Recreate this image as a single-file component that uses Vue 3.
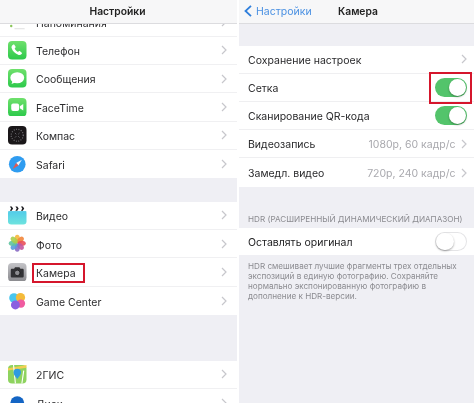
<script setup>
const listA = [
  { name: 'Напоминания', icon: 'rem' },
  { name: 'Телефон', icon: 'phone' },
  { name: 'Сообщения', icon: 'msg' },
  { name: 'FaceTime', icon: 'ft' },
  { name: 'Компас', icon: 'compass' },
  { name: 'Safari', icon: 'safari' },
]
const listB = [
  { name: 'Видео', icon: 'video' },
  { name: 'Фото', icon: 'photo' },
  { name: 'Камера', icon: 'camera', mark: true },
  { name: 'Game Center', icon: 'gc' },
]
const listC = [
  { name: '2ГИС', icon: 'gis' },
  { name: 'Диск', icon: 'disk' },
]
const groups = [
  { items: listA, cls: 'g-a' },
  { items: listB, cls: 'g-b' },
  { items: listC, cls: 'g-c' },
]
const petals = ['#f6b73c', '#f2863b', '#e9505a', '#c4579f', '#8a6cc4', '#5a9bdc', '#5fc3a0', '#a6ce4e']
</script>

<template>
  <div class="screen">
    <section class="panel left">
      <header class="nav nav-l"><span class="nav-title">Настройки</span></header>
      <div class="viewport">
        <div class="scroll">
          <div v-for="g in groups" :key="g.cls" class="group" :class="g.cls">
            <div v-for="it in g.items" :key="it.name" class="row">
              <span class="icon">
                <svg viewBox="0 0 20 20" width="18.500" height="18.500">
                  <defs>
                    <linearGradient id="grn" x1="0" y1="0" x2="0" y2="1">
                      <stop offset="0" stop-color="#6fe06c" />
                      <stop offset="1" stop-color="#2cc94b" />
                    </linearGradient>
                    <linearGradient id="teal" x1="0" y1="0" x2="0" y2="1">
                      <stop offset="0" stop-color="#4fc9ea" />
                      <stop offset="1" stop-color="#6ee3de" />
                    </linearGradient>
                    <linearGradient id="gry" x1="0" y1="0" x2="0" y2="1">
                      <stop offset="0" stop-color="#c4c4c8" />
                      <stop offset="1" stop-color="#8a8a8e" />
                    </linearGradient>
                  </defs>
                  <template v-if="it.icon === 'rem'">
                    <rect width="20" height="20" rx="4" fill="#fff" />
                    <circle cx="3.500" cy="14" r="1.300" fill="#8ac65a" />
                    <path d="M7 6h11M7 17h11" stroke="#ddd" />
                  </template>
                  <template v-else-if="it.icon === 'phone'">
                    <rect width="20" height="20" rx="4.400" fill="url(#grn)" />
                    <path d="M5.200 4.200c.6-.6 1.400-.5 1.800.1l1.100 1.700c.3.5.2 1-.2 1.400l-.7.7c.6 1.500 2 3 3.600 3.800l.8-.7c.4-.4 1-.4 1.400-.1l1.600 1.200c.6.4.6 1.200.1 1.700-1 1.100-2.300 1.400-3.700.9-3.500-1.200-6.100-4-7.100-7.200-.4-1.300.1-2.500 1.100-3.500z" fill="#fff" />
                  </template>
                  <template v-else-if="it.icon === 'msg'">
                    <rect width="20" height="20" rx="4.400" fill="url(#grn)" />
                    <ellipse cx="10" cy="9.500" rx="7.500" ry="6" fill="#fff" />
                    <path d="M5 13l-1.200 3.200 4-1.600z" fill="#fff" />
                  </template>
                  <template v-else-if="it.icon === 'ft'">
                    <rect width="20" height="20" rx="4.400" fill="url(#grn)" />
                    <rect x="3.500" y="6" width="8.500" height="8" rx="2" fill="#fff" />
                    <path d="M12.800 9l3.700-2.600v7.200l-3.700-2.600z" fill="#fff" />
                  </template>
                  <template v-else-if="it.icon === 'compass'">
                    <rect width="20" height="20" rx="4.400" fill="#1a1719" />
                    <circle cx="10" cy="10" r="6.500" fill="none" stroke="#77767a" stroke-width="1.300" stroke-dasharray="1 1.600" />
                    <path d="M7.500 7.500l1.500 1.500M12.500 12.500l-1.500-1.500M12.500 7.500l-1.500 1.500M7.500 12.500l1.500-1.500" stroke="#66656a" />
                  </template>
                  <template v-else-if="it.icon === 'safari'">
                    <circle cx="10" cy="10" r="9" fill="#2f9cf0" />
                    <path d="M15 5L11.300 11.300 8.700 8.700z" fill="#f2f4f7" />
                    <path d="M5 15L8.700 8.700 11.300 11.300z" fill="#e8584e" />
                  </template>
                  <template v-else-if="it.icon === 'video'">
                    <rect y="4" width="20" height="16" rx="3.500" fill="url(#teal)" />
                    <rect width="20" height="5.500" fill="#fff" />
                    <path d="M2 .5h2l1.500 2.200L4 5H2l1.500-2.300zM8 .5h2l1.500 2.200L10 5H8l1.500-2.300zM14 .5h2l1.500 2.200L16 5h-2l1.500-2.300z" fill="#1b1b1f" />
                  </template>
                  <template v-else-if="it.icon === 'photo'">
                    <g v-for="(c, i) in petals" :key="c" :transform="`rotate(${i * 45} 10 10)`">
                      <ellipse cx="10" cy="5.200" rx="2.800" ry="4.400" :fill="c" opacity=".9" />
                    </g>
                  </template>
                  <template v-else-if="it.icon === 'camera'">
                    <rect width="20" height="20" rx="4.400" fill="url(#gry)" />
                    <path d="M3 7.500c0-.8.600-1.400 1.400-1.400h2.200l1-1.600h4.800l1 1.600h2.200c.8 0 1.400.6 1.400 1.400v6.800c0 .8-.6 1.400-1.400 1.400H4.400c-.8 0-1.400-.6-1.400-1.400z" fill="#323235" />
                    <circle cx="10" cy="10.700" r="3" fill="#8d8d91" stroke="#1e1e20" />
                  </template>
                  <template v-else-if="it.icon === 'gc'">
                    <circle cx="6.500" cy="6.500" r="5.200" fill="#49c6ee" />
                    <circle cx="13.500" cy="6" r="5" fill="#f4bb3a" />
                    <circle cx="14" cy="12.500" r="4.500" fill="#f05ba0" />
                    <circle cx="8" cy="14" r="4.800" fill="#8a5fe0" />
                  </template>
                  <template v-else-if="it.icon === 'gis'">
                    <rect width="20" height="20" rx="4.400" fill="#8ed35f" />
                    <path d="M0 3.500L20 0v3L0 6z" fill="#f0cf52" />
                    <path d="M6 0l2 20M15 20l2-14" stroke="#fff" stroke-width="1.200" />
                    <path d="M10 15c-2.500-3-4-4.800-4-7a4 4 0 0 1 8 0c0 2.200-1.500 4-4 7z" fill="#2e9be0" />
                  </template>
                  <template v-else>
                    <rect width="20" height="20" rx="4.400" fill="#fff" />
                    <circle cx="10" cy="10" r="7.500" fill="#1465c4" />
                  </template>
                </svg>
              </span>
              <span class="label" :class="{ marked: it.mark }">{{ it.name }}</span>
              <svg class="chev" viewBox="0 0 6 10" width="6" height="10"><path d="M1 1l4 4-4 4" /></svg>
            </div>
          </div>
        </div>
      </div>
    </section>

    <section class="panel right">
      <header class="nav nav-r">
        <span class="back">
          <svg viewBox="0 0 8 12" width="8" height="12"><path d="M7 .8L1.500 6 7 11.200" /></svg>
          Настройки
        </span>
        <span class="nav-title centered">Камера</span>
      </header>
      <div class="settings">
        <div class="row-r">
          <span class="txt">Сохранение настроек</span>
          <svg class="chev" viewBox="0 0 6 10" width="6" height="10"><path d="M1 1l4 4-4 4" /></svg>
        </div>
        <div class="row-r">
          <span class="txt">Сетка</span>
          <span class="toggle-mark"><span class="toggle on"></span></span>
        </div>
        <div class="row-r">
          <span class="txt">Сканирование QR-кода</span>
          <span class="toggle on"></span>
        </div>
        <div class="row-r">
          <span class="txt">Видеозапись</span>
          <span class="val">1080р, 60 кадр/с</span>
          <svg class="chev" viewBox="0 0 6 10" width="6" height="10"><path d="M1 1l4 4-4 4" /></svg>
        </div>
        <div class="row-r">
          <span class="txt">Замедл. видео</span>
          <span class="val">720р, 240 кадр/с</span>
          <svg class="chev" viewBox="0 0 6 10" width="6" height="10"><path d="M1 1l4 4-4 4" /></svg>
        </div>
      </div>
      <h3 class="caption">HDR (РАСШИРЕННЫЙ ДИНАМИЧЕСКИЙ ДИАПАЗОН)</h3>
      <div class="settings single">
        <div class="row-r tall">
          <span class="txt">Оставлять оригинал</span>
          <span class="toggle"></span>
        </div>
      </div>
      <p class="note">HDR смешивает лучшие фрагменты трех отдельных экспозиций в единую фотографию. Сохраняйте нормально экспонированную фотографию в дополнение к HDR-версии.</p>
    </section>
  </div>
</template>

<style>
html, body { margin: 0; background: #fff; }
</style>

<style scoped>
.screen {
  width: 474px;
  height: 403px;
  display: flex;
  gap: 2px;
  overflow: hidden;
  background: #fff;
  font-family: Inter, "Liberation Sans", sans-serif;
  color: #2a2a2c;
  filter: blur(0.55px);
}
.panel { display: flex; flex-direction: column; background: #efeff4; height: 403px; }
.left { width: 237px; }
.right { width: 235px; }
.nav {
  height: 23.500px;
  flex: none;
  box-sizing: border-box;
  display: flex;
  align-items: center;
  justify-content: center;
  background: #f7f7f8;
  border-bottom: 1px solid #dcdcdf;
}
.nav-l { padding-right: 2px; }
.nav-title { font-size: 10.300px; font-weight: 600; color: #222; }
.nav-r { justify-content: flex-start; }
.centered { margin-left: 23px; }
.back {
  display: flex;
  align-items: center;
  gap: 4px;
  margin-left: 5px;
  width: 71px;
  font-size: 10.500px;
  color: #4a90e2;
  white-space: nowrap;
}
.back svg { fill: none; stroke: #2f7fdc; stroke-width: 1.800; flex: none; }
.viewport { flex: 1; overflow: hidden; }
.scroll { margin-top: -15.130px; }
.group { background: #fff; }
.g-b { margin-top: 23.400px; }
.g-c { margin-top: 45.700px; }
.row {
  height: 28.330px;
  box-sizing: border-box;
  display: flex;
  align-items: center;
  padding: 0 10px 0 8px;
  border-bottom: 1px solid #f0f0f2;
}
.group .row:last-child { border-bottom: none; }
.icon { width: 18.500px; height: 18.500px; flex: none; display: block; }
.icon svg { display: block; }
.label {
  margin-left: 9.500px;
  font-size: 10.500px;
  flex: 1;
  color: #2c2c2e;
  position: relative;
  top: 1.300px;
}
.marked::before {
  content: "";
  position: absolute;
  left: -4px;
  top: -3.800px;
  width: 53px;
  height: 20px;
  border: 2px solid #d5162c;
  box-sizing: border-box;
}
.chev { flex: none; fill: none; stroke: #c7c7cc; stroke-width: 1.200; }
.settings { margin-top: 22px; background: #fff; flex: none; }
.row-r {
  height: 28.240px;
  box-sizing: border-box;
  display: flex;
  align-items: center;
  padding: 0 7px 0 9px;
  font-size: 10.500px;
  border-bottom: 1px solid #efeff1;
}
.txt { flex: 1; position: relative; top: 1px; }
.row-r:last-child { border-bottom: none; }
.tall { height: 27.300px; color: #1c1c1e; }
.val { color: #a9a9ae; margin-right: 5.500px; position: relative; top: 1px; }
.toggle {
  display: block;
  width: 32px;
  height: 19.500px;
  border-radius: 10px;
  background: #fff;
  box-shadow: inset 0 0 0 1px #e4e4e6;
  position: relative;
  flex: none;
}
.toggle::after {
  content: "";
  position: absolute;
  top: 1px;
  left: 1px;
  width: 17.500px;
  height: 17.500px;
  border-radius: 50%;
  background: #fff;
  box-shadow: 0 1px 2px rgba(0, 0, 0, .35);
}
.toggle.on { background: #53c46b; box-shadow: none; }
.toggle.on::after { left: 13.500px; }
.toggle-mark {
  flex: none;
  position: relative;
  display: block;
}
.toggle-mark::before {
  content: "";
  position: absolute;
  left: -6.500px;
  top: -5.700px;
  width: 43.500px;
  height: 32px;
  border: 2.500px solid #d5162c;
  box-sizing: border-box;
}
.caption {
  margin: 0;
  box-sizing: border-box;
  padding: 0 0 3.400px 9px;
  height: 41px;
  display: flex;
  align-items: flex-end;
  font-size: 8.150px;
  line-height: 10px;
  font-weight: 400;
  color: #8b8b90;
  white-space: nowrap;
}
.single { margin-top: 0; }
.note {
  margin: 6.200px 0 0;
  padding: 0 9px;
  font-size: 8.150px;
  line-height: 10px;
  color: #8b8b90;
}
</style>
